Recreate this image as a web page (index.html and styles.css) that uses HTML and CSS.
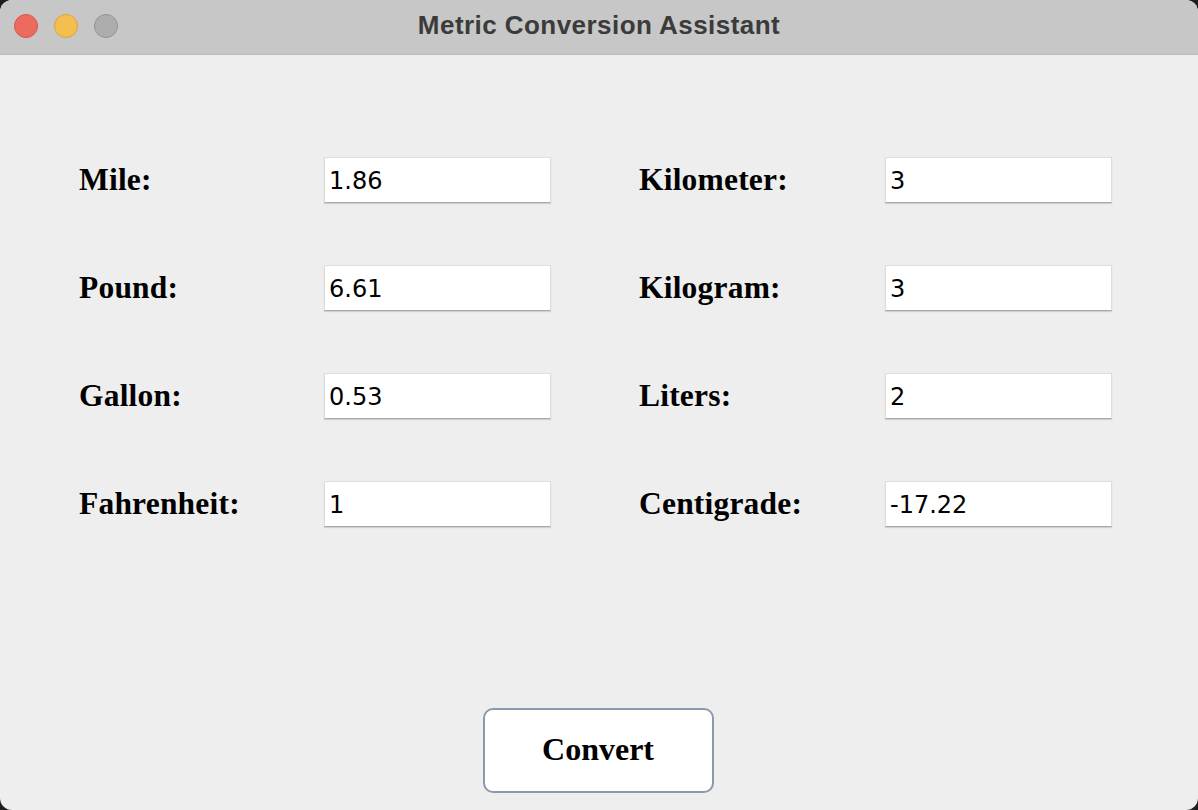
FILE: index.html
```html
<!DOCTYPE html>
<html>
<head>
<meta charset="utf-8">
<title>Metric Conversion Assistant</title>
<link rel="stylesheet" href="styles.css">
</head>
<body>
<div class="window">
  <div class="titlebar">
    <div class="lights">
      <span class="light red"></span>
      <span class="light yellow"></span>
      <span class="light grey"></span>
    </div>
    <div class="title">Metric Conversion Assistant</div>
  </div>
  <div class="content">
    <div class="form">
      <label class="label">Mile:</label>
      <input class="field" type="text" value="1.86">
      <label class="label">Kilometer:</label>
      <input class="field" type="text" value="3">

      <label class="label">Pound:</label>
      <input class="field" type="text" value="6.61">
      <label class="label">Kilogram:</label>
      <input class="field" type="text" value="3">

      <label class="label">Gallon:</label>
      <input class="field" type="text" value="0.53">
      <label class="label">Liters:</label>
      <input class="field" type="text" value="2">

      <label class="label">Fahrenheit:</label>
      <input class="field" type="text" value="1">
      <label class="label">Centigrade:</label>
      <input class="field" type="text" value="-17.22">
    </div>
    <button class="convert" type="button">Convert</button>
  </div>
</div>
</body>
</html>
```
FILE: styles.css
```css
html, body {
  margin: 0;
  padding: 0;
  background: #1e1e1e;
}

.window {
  width: 1198px;
  height: 810px;
  border-radius: 12px;
  overflow: hidden;
  background: #eeeeee;
  display: flex;
  flex-direction: column;
}

.titlebar {
  position: relative;
  height: 54px;
  flex: 0 0 54px;
  background: #c6c7c6;
  border-bottom: 1px solid #bababa;
  display: flex;
  align-items: center;
  justify-content: center;
}

.lights {
  position: absolute;
  left: 14px;
  top: 14px;
  display: flex;
  gap: 16px;
}

.light {
  width: 22px;
  height: 22px;
  border-radius: 50%;
  display: block;
}

.red {
  background: #ec6a5e;
  border: 1px solid #d2574c;
}

.yellow {
  background: #f5bf4f;
  border: 1px solid #d7a33f;
}

.grey {
  background: #adadad;
  border: 1px solid #939393;
}

.title {
  font-family: "Liberation Sans", Arial, sans-serif;
  font-weight: bold;
  font-size: 26px;
  letter-spacing: 0.45px;
  color: #3b3b3b;
  margin-top: -4px;
}

.content {
  flex: 1;
  display: flex;
  flex-direction: column;
  align-items: center;
  padding: 102px 0 17px 0;
}

.form {
  align-self: stretch;
  padding-left: 79px;
  display: grid;
  grid-template-columns: 245px 315px 246px 226px;
  grid-auto-rows: 46px;
  row-gap: 62px;
  align-items: center;
}

.label {
  font-family: "Liberation Serif", "Times New Roman", serif;
  font-weight: bold;
  font-size: 31.5px;
  letter-spacing: 0.2px;
  color: #000;
}

.field {
  box-sizing: border-box;
  width: 227px;
  height: 46px;
  margin: 0;
  padding: 2px 5px 0 4px;
  background: #ffffff;
  border: 1px solid #dddddd;
  border-bottom: 1px solid #a8a8a8;
  box-shadow: 0 1px 1px rgba(0, 0, 0, 0.12);
  border-radius: 0;
  outline: none;
  font-family: "DejaVu Sans", sans-serif;
  font-size: 24px;
  color: #000;
}

.convert {
  margin-top: auto;
  margin-right: 2px;
  width: 231px;
  height: 85px;
  box-sizing: border-box;
  background: #ffffff;
  border: 2.5px solid #8a9aae;
  border-radius: 10px;
  font-family: "Liberation Serif", "Times New Roman", serif;
  font-weight: bold;
  font-size: 32px;
  color: #000;
  padding: 0 0 3px 0;
}
```
